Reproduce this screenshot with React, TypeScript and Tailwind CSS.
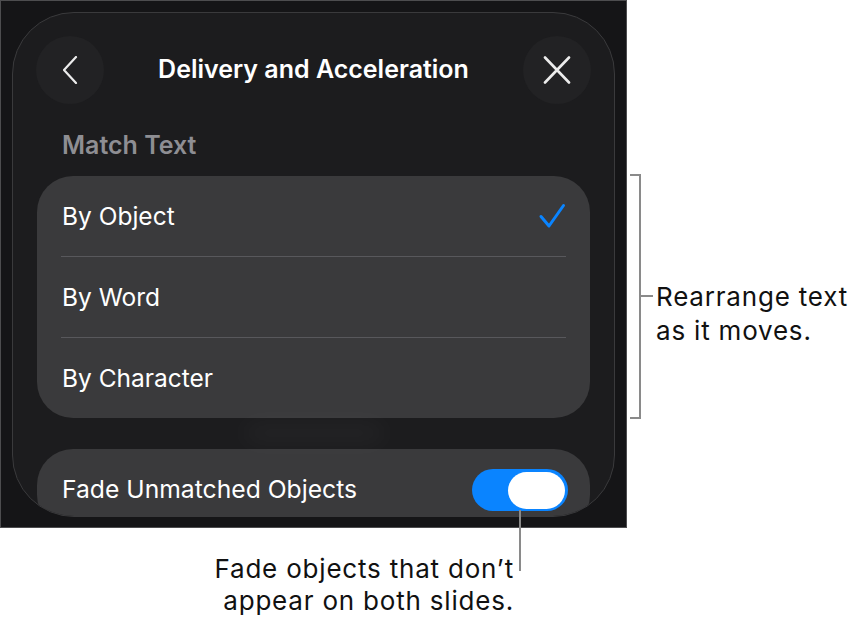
import { useState } from 'react';

const FONT = { fontFamily: 'Inter, "Noto Sans", sans-serif' };

const OPTIONS = ['By Object', 'By Word', 'By Character'];

function Check() {
  return (
    <svg width="28" height="28" viewBox="0 0 28 28" fill="none" stroke="#0a84ff" strokeWidth="3" strokeLinecap="round" strokeLinejoin="round">
      <path d="M3 14.5l8 9.5L25.5 3.5" />
    </svg>
  );
}

function Toggle({ on }: { on: boolean }) {
  return (
    <div className="flex items-center w-[96px] h-[42px] rounded-full bg-[#0a84ff] px-[3px] justify-end">
      {on && <div className="w-[57px] h-[37px] rounded-full bg-white" />}
    </div>
  );
}

function Sheet() {
  const [selected, setSelected] = useState(0);

  return (
    <div className="relative mt-[11px] mx-[11px] h-[505px] rounded-[62px] border border-[#3a3a3c] bg-[#1c1c1e] overflow-hidden">
      {/* header */}
      <div className="flex items-center justify-between px-[23px] pt-[23px]">
        <button type="button" className="flex items-center justify-center w-[68px] h-[68px] rounded-full bg-[#222224]" aria-label="Back">
          <svg width="28" height="28" viewBox="0 0 28 28" fill="none" stroke="#ececec" strokeWidth="2.2" strokeLinecap="round" strokeLinejoin="round">
            <path d="M20 1L8 14l12 13" />
          </svg>
        </button>
        <h1 className="text-[25px] font-semibold text-white">Delivery and Acceleration</h1>
        <button type="button" className="flex items-center justify-center w-[68px] h-[68px] rounded-full bg-[#222224]" aria-label="Close">
          <svg width="28" height="28" viewBox="0 0 28 28" fill="none" stroke="#ececec" strokeWidth="2.6" strokeLinecap="round">
            <path d="M2 1.5l24 25M26 1.5l-24 25" />
          </svg>
        </button>
      </div>

      <div className="pl-[49px] mt-[26px] text-[25px] font-semibold text-[#8e8e93] leading-[30px]">Match Text</div>

      {/* options */}
      <div className="mx-[24px] mt-[16px] rounded-[36px] bg-[#3a3a3c]">
        {OPTIONS.map((label, i) => (
          <div key={label}>
            {i > 0 && <div className="mx-[24px] h-px bg-[#58585c]" />}
            <button
              type="button"
              onClick={() => setSelected(i)}
              className="flex items-center justify-between w-full h-[80px] pl-[25px] pr-[24px] text-left"
            >
              <span className="text-[24.5px] text-white">{label}</span>
              {selected === i && <Check />}
            </button>
          </div>
        ))}
      </div>

      {/* content scrolled under the list */}
      <div className="mx-auto mt-[8px] w-[140px] h-[14px] rounded-full bg-white/5 blur-md" />

      <div className="mx-[24px] mt-[9px] h-[82px] rounded-[36px] bg-[#3a3a3c] flex items-center justify-between pl-[25px] pr-[22px]">
        <span className="text-[24.7px] text-white">Fade Unmatched Objects</span>
        <Toggle on />
      </div>
    </div>
  );
}

export default function App() {
  return (
    <div className="w-[854px] h-[622px] bg-white flex flex-col" style={FONT}>
      <div className="flex">
        <div className="w-[627px] h-[528px] border border-[#4d4d4f] bg-[#151517] overflow-hidden">
          <Sheet />
        </div>

        {/* bracket callout */}
        <div className="flex items-start pt-[174px]">
          <div className="ml-[3px] w-[11px] h-[245px] border-y-2 border-r-2 border-[#8a8a8a]" />
          <div className="flex items-start pt-[106px]">
            <div className="w-[12px] h-[2px] mt-[15px] bg-[#8a8a8a]" />
            <div className="ml-[3px] text-[26px] tracking-[0.8px] leading-[34px] text-[#111] whitespace-nowrap">
              Rearrange text<br />as it moves.
            </div>
          </div>
        </div>
      </div>

      {/* toggle callout */}
      <div className="relative h-[94px]">
        <div className="absolute left-[519px] top-[-18px] w-[2px] h-[61px] bg-[#8a8a8a]" />
        <div className="absolute right-[340px] top-[25px] text-right text-[26px] tracking-[0.8px] leading-[32px] text-[#111] whitespace-nowrap">
          Fade objects that don’t<br />appear on both slides.
        </div>
      </div>
    </div>
  );
}
